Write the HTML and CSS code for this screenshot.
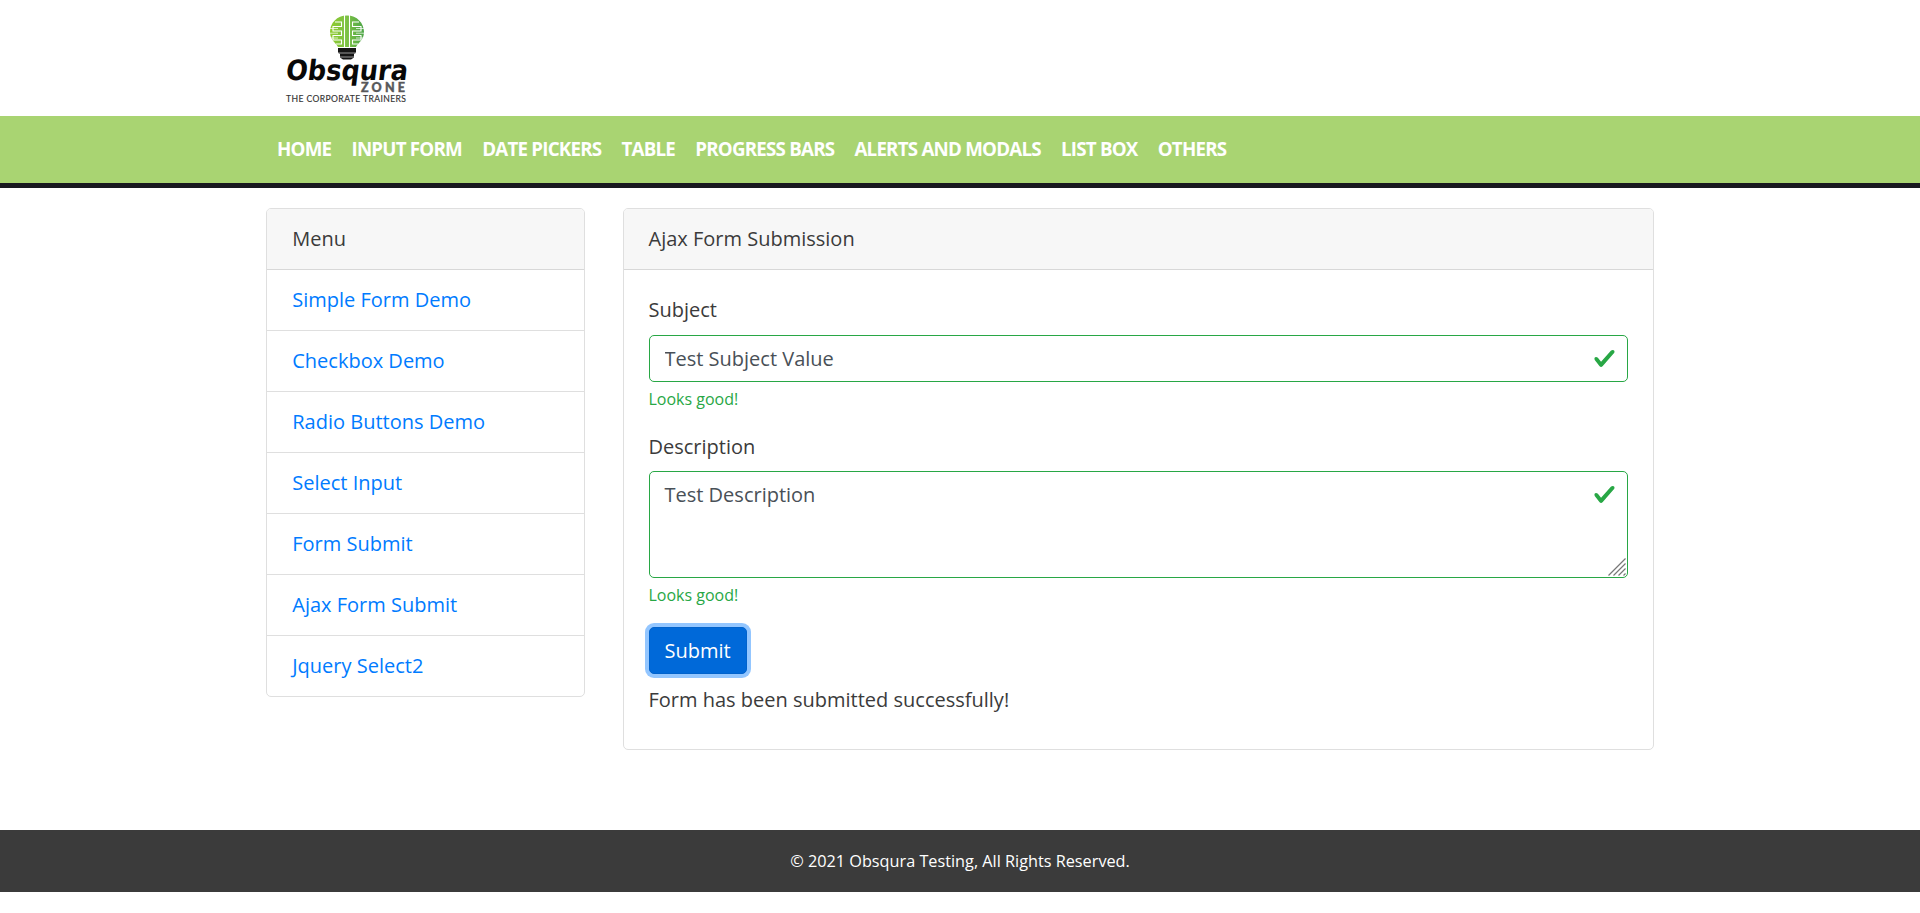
FILE: index.html
```html
<!DOCTYPE html>
<html lang="en">
<head>
<meta charset="utf-8">
<title>Obsqura Zone - Ajax Form Submission</title>
<link rel="stylesheet" href="styles.css">
</head>
<body>
<header class="top">
  <div class="container">
    <a class="logo" href="#">
      <svg width="124" height="92" viewBox="285 14 124 92" aria-label="Obsqura Zone">
        <defs>
          <linearGradient id="leaf" x1="0" x2="1" y1="0" y2="0">
            <stop offset="0" stop-color="#8fcb2e"/>
            <stop offset=".5" stop-color="#7cc144"/>
            <stop offset="1" stop-color="#4da548"/>
          </linearGradient>
        </defs>
        <path d="M347 15.500C337 15.500 330 23 330 32C330 40 336 43 338 47H356C358 43 364 40 364 32C364 23 357 15.500 347 15.500Z" fill="url(#leaf)"/>
        <g fill="none" stroke="#fff" stroke-width="1.100">
          <path d="M344.500 15V47M349.500 15V47"/>
          <path d="M335 22H341.500V26.500H333V31H341.500V35.500H333V40H341.500V44H336"/>
          <path d="M359 22H352.500V26.500H361V31H352.500V35.500H361V40H352.500V44H358"/>
          <path d="M329.500 28.500H338M329.500 33.200H338M331 38H338M364.500 28.500H356M364.500 33.200H356M363 38H356" stroke-width=".7"/>
        </g>
        <path d="M338 48H356V52.500L354 54V57.500L351 59.500H343L340 57.500V54L338 52.500Z" fill="#151515"/>
        <path d="M338 53H356M340 57H354" stroke="#bbb" stroke-width=".8"/>
        <text class="brand" transform="translate(285 79.500) skewX(-7)" textLength="122" lengthAdjust="spacingAndGlyphs">Obsqura</text>
        <text class="brand-zone" x="361" y="92" textLength="44" lengthAdjust="spacing">ZONE</text>
        <text class="brand-tag" x="286" y="101.800" textLength="120" lengthAdjust="spacing">THE CORPORATE TRAINERS</text>
      </svg>
    </a>
  </div>
</header>
<nav class="navbar">
  <div class="container nav-list">
    <a href="#">HOME</a>
    <a href="#">INPUT FORM</a>
    <a href="#">DATE PICKERS</a>
    <a href="#">TABLE</a>
    <a href="#">PROGRESS BARS</a>
    <a href="#">ALERTS AND MODALS</a>
    <a href="#">LIST BOX</a>
    <a href="#">OTHERS</a>
  </div>
</nav>
<main class="container content">
  <aside class="card menu">
    <div class="card-header">Menu</div>
    <ul class="menu-list">
      <li><a href="#">Simple Form Demo</a></li>
      <li><a href="#">Checkbox Demo</a></li>
      <li><a href="#">Radio Buttons Demo</a></li>
      <li><a href="#">Select Input</a></li>
      <li><a href="#">Form Submit</a></li>
      <li><a href="#">Ajax Form Submit</a></li>
      <li><a href="#">Jquery Select2</a></li>
    </ul>
  </aside>
  <section class="card panel">
    <div class="card-header">Ajax Form Submission</div>
    <form class="card-body">
      <div class="field">
        <label for="subject">Subject</label>
        <input class="control" id="subject" type="text" value="Test Subject Value">
        <div class="feedback">Looks good!</div>
      </div>
      <div class="field">
        <label for="description">Description</label>
        <textarea class="control area" id="description" rows="3">Test Description</textarea>
        <div class="feedback">Looks good!</div>
      </div>
      <button class="submit" type="button">Submit</button>
      <div class="message">Form has been submitted successfully!</div>
    </form>
  </section>
</main>
<footer class="footer">© 2021 Obsqura Testing, All Rights Reserved.</footer>
</body>
</html>
```

FILE: styles.css
```css
*, *::before, *::after { box-sizing: border-box; }

body {
  margin: 0;
  background: #fff;
  color: #3b3b3b;
  font: 20px/30px "Open Sans", "Noto Sans", sans-serif;
}

a { color: #007bff; text-decoration: none; }

.container { width: 1387.5px; margin: 0 auto; }

.top { height: 116px; padding-top: 14px; }
.logo { display: block; width: 124px; margin-left: 18.75px; }
.logo svg { display: block; }
.brand { fill: #080808; font: 700 28px "DejaVu Sans", sans-serif; }
.brand-zone { fill: #58585a; stroke: #58585a; stroke-width: .4px; font: 900 12.5px Lato, sans-serif; }
.brand-tag { fill: #333; stroke: #333; stroke-width: .15px; font: 400 8.6px Lato, sans-serif; }

.navbar { height: 72px; background: #a9d472; border-bottom: 5px solid #18181f; }
.nav-list { display: flex; height: 66px; align-items: center; padding-left: .75px; }
.nav-list a {
  padding: 0 10.15px 0 10px;
  color: #fff;
  font-size: 18.75px;
  font-weight: 700;
  letter-spacing: -.785px;
}

.content { display: flex; align-items: flex-start; gap: 37.5px; padding-top: 20px; }
.card { border: 1px solid #dfdfdf; border-radius: 5px; overflow: hidden; }
.menu { width: 318.75px; }
.panel { flex: 1; }
.card-header {
  height: 61.25px;
  padding: 15px 25px;
  background: #f7f7f7;
  border-bottom: 1px solid #d8d8d8;
}
.menu-list { margin: 0; padding: 0; list-style: none; }
.menu-list li { height: 61px; padding: 15px 25px; border-bottom: 1px solid #dfdfdf; }
.menu-list li:last-child { height: 60px; border-bottom: 0; }

.card-body { margin: 0; padding: 25px; }
.field { margin-bottom: 20px; }
.field label { display: block; margin-bottom: 10px; }
.field + .field label { padding-top: .5px; margin-bottom: 9.5px; }
.control {
  display: block;
  width: 100%;
  height: 47px;
  padding: 7.5px 45px 7.5px 15px;
  border: 1px solid #28a745;
  border-radius: 5px;
  outline: 0;
  background: #fff url("data:image/svg+xml,%3Csvg xmlns='http://www.w3.org/2000/svg' viewBox='0 0 8 8'%3E%3Cpath fill='%2328a745' d='M2.3 6.73L.6 4.53c-.4-1.04.46-1.4 1.1-.8l1.1 1.4 3.400-3.800c.6-.63 1.600-.27 1.200.7l-4 4.600c-.43.5-.8.4-1.100.1z'/%3E%3C/svg%3E") no-repeat right 11.25px top 10.5px / 22.5px 22.5px;
  color: #495057;
  font: inherit;
}
.area {
  height: 107px;
  resize: none;
  background-image:
    url("data:image/svg+xml,%3Csvg xmlns='http://www.w3.org/2000/svg' viewBox='0 0 8 8'%3E%3Cpath fill='%2328a745' d='M2.3 6.73L.6 4.53c-.4-1.04.46-1.4 1.1-.8l1.1 1.4 3.400-3.800c.6-.63 1.600-.27 1.200.7l-4 4.600c-.43.5-.8.4-1.100.1z'/%3E%3C/svg%3E"),
    url("data:image/svg+xml,%3Csvg xmlns='http://www.w3.org/2000/svg' viewBox='0 0 18 18'%3E%3Cpath stroke='%23777' stroke-width='1.200' d='M.5 17.500L17.500.5M5.500 17.500L17.500 5.500M10.500 17.500L17.500 10.500M15.500 17.500L17.500 15.500'/%3E%3C/svg%3E");
  background-position: right 11.25px top 10.5px, right 1px bottom 1px;
  background-size: 22.5px 22.5px, 18px 18px;
}
.feedback { margin-top: 5px; color: #28a745; font-size: 16px; line-height: 24px; }
.submit {
  display: block;
  height: 47px;
  padding: 7.5px 15px;
  border: 1px solid #0062cc;
  border-radius: 5px;
  background: #0069d9;
  box-shadow: 0 0 0 4px #93c6ff;
  color: #fff;
  font: inherit;
}
.message { margin: 11px 0 9px; }

.footer {
  height: 62px;
  margin-top: 80px;
  background: #3b3b3b;
  color: #fff;
  font-size: 16.25px;
  line-height: 62px;
  text-align: center;
}
```
